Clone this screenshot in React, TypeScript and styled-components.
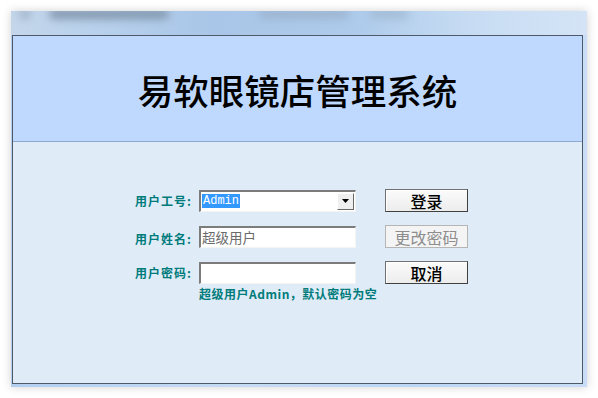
import React from "react";
import styled, { createGlobalStyle } from "styled-components";

const Global = createGlobalStyle`
  html, body { margin: 0; padding: 0; background: #ffffff; }
  body { width: 598px; height: 398px; overflow: hidden; font-family: "Noto Sans CJK SC", "Noto Sans", sans-serif; }
`;

const Window = styled.div`
  margin: 11px 0 0 11px;
  width: 576px;
  height: 376px;
  display: flex;
  flex-direction: column;
  background: linear-gradient(90deg, #b3cff0 0%, #c6dcf5 40%, #bcd6f4 70%, #c9def6 100%);
  box-shadow: 0 0 9px rgba(0, 0, 0, 0.18);
`;

const TitleBar = styled.div`
  height: 24px;
  flex: none;
  display: flex;
  align-items: flex-start;
  gap: 10px;
  padding-left: 8px;
  overflow: hidden;
  background: linear-gradient(90deg, #c4d6ea 0%, #bcd3ec 10%, #a9c6e8 35%, #aecbeb 60%, #c7dcf3 80%, #d4e4f6 100%);
`;

const Blur = styled.span<{ $w: number; $c: string; $ml?: number }>`
  display: block;
  width: ${(p) => p.$w}px;
  height: 10px;
  margin-left: ${(p) => p.$ml ?? 0}px;
  margin-top: -2px;
  background: ${(p) => p.$c};
  filter: blur(4px);
  border-radius: 5px;
`;

const Panel = styled.div`
  flex: 1;
  margin: 0 4px 3px 1px;
  border: 1px solid #4e5a6a;
  display: flex;
  flex-direction: column;
  background: #dfecf8;
`;

const Header = styled.header`
  height: 105px;
  flex: none;
  background: #bed8fe;
  border-bottom: 1px solid #8ea8d2;
  display: flex;
  align-items: center;
  justify-content: center;
`;

const Title = styled.h1`
  margin: 0;
  font-family: "Noto Sans CJK SC", sans-serif;
  font-size: 35.5px;
  font-weight: 500;
  color: #000;
  padding-top: 2px;
`;

const Body = styled.main`
  flex: 1;
  padding: 47px 0 0 122px;
`;

const Form = styled.div`
  display: grid;
  grid-template-columns: 64px 157px 112px;
  grid-template-rows: 23px 23px 23px auto;
  row-gap: 13px;
  align-items: center;
`;

const Label = styled.label<{ $dy?: number }>`
  font-family: "Noto Sans CJK SC", sans-serif;
  font-size: 12px;
  font-weight: 700;
  letter-spacing: 1px;
  color: #007b7b;
  padding-top: ${(p) => p.$dy ?? 0}px;
  white-space: nowrap;
`;

const Field = styled.div`
  box-sizing: border-box;
  height: 22px;
  width: 157px;
  background: #ffffff;
  border-top: 2px solid #7c7c7c;
  border-left: 2px solid #7c7c7c;
  border-right: 1px solid #f4f4f4;
  border-bottom: 1px solid #f4f4f4;
  display: flex;
  align-items: center;
`;

const Selected = styled.span`
  margin-left: 1px;
  height: 14px;
  line-height: 14px;
  padding: 0 1px;
  background: #3399ff;
  color: #ffffff;
  font-family: "Liberation Mono", monospace;
  font-size: 12px;
`;

const DropButton = styled.span`
  margin-left: auto;
  margin-right: 1px;
  box-sizing: border-box;
  width: 17px;
  height: 17px;
  background: #efefef;
  border-top: 1px solid #ffffff;
  border-left: 1px solid #ffffff;
  border-right: 1px solid #6a6a6a;
  border-bottom: 1px solid #6a6a6a;
  display: flex;
  align-items: center;
  justify-content: center;
`;

const Placeholder = styled.span`
  margin-left: 1px;
  font-family: "Noto Sans CJK SC", sans-serif;
  font-size: 13.5px;
  color: #6b6b6b;
  line-height: 18px;
`;

const Button = styled.button<{ $disabled?: boolean }>`
  justify-self: end;
  box-sizing: border-box;
  width: 83px;
  height: 23px;
  padding: 0;
  font-family: "Noto Sans CJK SC", sans-serif;
  font-size: 16px;
  font-weight: ${(p) => (p.$disabled ? 400 : 500)};
  line-height: 18px;
  color: ${(p) => (p.$disabled ? "#8d8d8d" : "#000000")};
  background: ${(p) => (p.$disabled ? "#f4f4f4" : "linear-gradient(#fbfbfb, #ececec)")};
  border: 1px solid ${(p) => (p.$disabled ? "#b5b5b5" : "#707070")};
  border-right-color: ${(p) => (p.$disabled ? "#b5b5b5" : "#404040")};
  border-bottom-color: ${(p) => (p.$disabled ? "#b5b5b5" : "#404040")};
  box-shadow: ${(p) => (p.$disabled ? "none" : "inset 1px 1px 0 #ffffff")};
  cursor: default;
`;

const Hint = styled.div`
  grid-column: 2 / 4;
  margin-top: -10px;
  font-family: "Noto Sans CJK SC", sans-serif;
  font-size: 12px;
  font-weight: 700;
  letter-spacing: 0.5px;
  color: #007b7b;
  white-space: nowrap;
  line-height: 14px;
`;

export default function App() {
  return (
    <>
      <Global />
      <Window>
        <TitleBar>
          <Blur $w={12} $c="#9fb2c6" />
          <Blur $w={120} $c="#8297ad" $ml={8} />
          <Blur $w={90} $c="#9cb5d0" $ml={80} />
          <Blur $w={40} $c="#a3bcd6" $ml={10} />
        </TitleBar>
        <Panel>
          <Header>
            <Title>易软眼镜店管理系统</Title>
          </Header>
          <Body>
            <Form>
              <Label>用户工号:</Label>
              <Field>
                <Selected>Admin</Selected>
                <DropButton>
                  <svg width="8" height="5" viewBox="0 0 8 5">
                    <path d="M0 0 H7 L3.5 4 Z" fill="#000" />
                  </svg>
                </DropButton>
              </Field>
              <Button>登录</Button>

              <Label $dy={4}>用户姓名:</Label>
              <Field>
                <Placeholder>超级用户</Placeholder>
              </Field>
              <Button $disabled>更改密码</Button>

              <Label>用户密码:</Label>
              <Field />
              <Button>取消</Button>

              <span />
              <Hint>超级用户Admin，默认密码为空</Hint>
            </Form>
          </Body>
        </Panel>
      </Window>
    </>
  );
}
